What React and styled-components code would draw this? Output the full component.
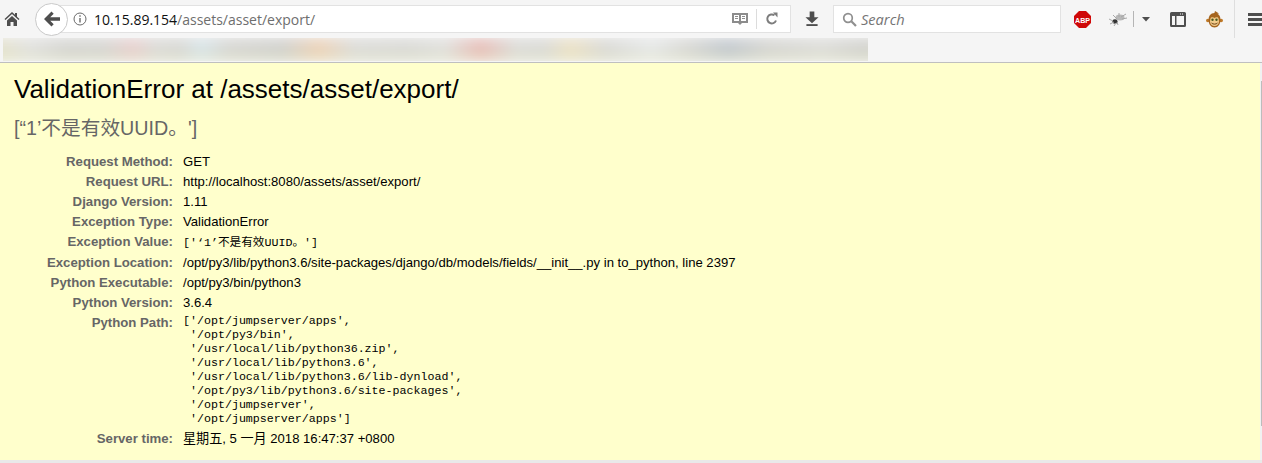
import React from 'react'
import styled, { createGlobalStyle } from 'styled-components'

const GlobalStyle = createGlobalStyle`
  html, body {
    margin: 0;
    padding: 0;
    height: 100%;
    overflow: hidden;
    background: #f5f5f5;
  }
`

const Window = styled.div`
  display: flex;
  flex-direction: column;
  width: 1262px;
  height: 463px;
  background: #e9e9e9;
`

const Toolbar = styled.div`
  display: flex;
  align-items: center;
  height: 38px;
  background: #f5f5f5;
  flex: none;
`

const ToolButton = styled.div`
  display: flex;
  align-items: center;
  justify-content: center;
  flex: none;
  width: ${(p) => p.$w || 24}px;
  margin-left: ${(p) => p.$ml || 0}px;
  color: #4e4e4e;
`

const BackCircle = styled.div`
  display: flex;
  align-items: center;
  justify-content: center;
  flex: none;
  box-sizing: border-box;
  width: 33px;
  height: 33px;
  margin-left: 11px;
  border: 1px solid #c9c9c9;
  border-radius: 50%;
  background: #fff;
  color: #4e4e4e;
  position: relative;
  z-index: 1;
`

const UrlBar = styled.div`
  display: flex;
  align-items: center;
  box-sizing: border-box;
  width: 734px;
  height: 28px;
  margin-left: -11px;
  padding-left: 16px;
  border: 1px solid #e2e2e2;
  border-left: none;
  background: #fff;
  font: 14px 'Open Sans', sans-serif;
  flex: none;
`

const UrlText = styled.div`
  margin-left: 7px;
  color: #6e6e6e;
  white-space: nowrap;
  flex: 1;

  b {
    font-weight: normal;
    color: #111;
  }
`

const BarSep = styled.div`
  flex: none;
  width: 1px;
  height: ${(p) => p.$h || 20}px;
  background: ${(p) => p.$c || '#dcdcdc'};
  margin: ${(p) => p.$m || '0'};
`

const SearchBox = styled.div`
  display: flex;
  align-items: center;
  box-sizing: border-box;
  width: 228px;
  height: 28px;
  margin-left: 14px;
  padding-left: 8px;
  border: 1px solid #e2e2e2;
  background: #fff;
  flex: none;
`

const SearchText = styled.span`
  margin-left: 4px;
  font: italic 14.6px 'Open Sans', sans-serif;
  color: #757575;
`

const BookmarkBar = styled.div`
  height: 24px;
  flex: none;
  background: #f5f5f5;
  border-bottom: 1px solid #bfbfbf;
  padding-left: 3px;
`

const BlurClip = styled.div`
  width: 865px;
  height: 23px;
  overflow: hidden;
`

const BlurStrip = styled.div`
  width: 865px;
  height: 23px;
  filter: blur(5px);
  transform: scale(1.04);
  background:
    linear-gradient(180deg, rgba(232, 232, 232, 0.6) 0%, rgba(218, 218, 214, 0.5) 50%, rgba(232, 234, 208, 0.75) 100%),
    linear-gradient(
      90deg,
      #e8e0b4 0%,
      #ece8c8 2%,
      #e6e6e4 5%,
      #cfcfcb 9%,
      #d0d0cc 13%,
      #f2c4c4 16.4%,
      #dadad6 19%,
      #d4d4d0 21.5%,
      #d4ecf6 24%,
      #d2d2ce 27%,
      #c6c6c2 33%,
      #fcc898 37%,
      #dcdcd8 41%,
      #d8d8d4 47%,
      #e4e4e0 51%,
      #f2a098 55%,
      #dcdcd8 59%,
      #d8d8d4 62%,
      #fae6b4 65%,
      #d8d8d4 69%,
      #f0f4f6 74%,
      #d6d6d2 78%,
      #aab6c4 82.5%,
      #d0d0cc 87%,
      #dededa 93%,
      #c8c8c4 98%,
      #e4e4cc 100%
    );
`

const Content = styled.div`
  display: flex;
  flex: none;
  height: 397px;
`

const Page = styled.div`
  flex: 1;
  box-sizing: border-box;
  padding: 12px 14px 0;
  background: #ffc;
  color: #000;
  font-family: 'Liberation Sans', Arial, 'Noto Sans CJK SC', sans-serif;
  font-size: 13px;
`

const ScrollTrack = styled.div`
  flex: none;
  width: 2px;
  background: #f1f1f1;
`

const ScrollThumb = styled.div`
  width: 1px;
  height: 345px;
  margin: 18px 0 0 1px;
  background: #bcbcbc;
`

const Title = styled.h1`
  margin: 0;
  font-size: 26px;
  line-height: 29px;
  font-weight: normal;
`

const ExceptionValue = styled.pre`
  margin: 11px 0 0;
  font-family: 'Liberation Sans', 'Noto Sans CJK SC', sans-serif;
  font-size: 19.700px;
  line-height: 26px;
  color: #666;
`

const Meta = styled.table`
  margin-top: 11px;
  border-collapse: collapse;
  border: none;
`

const Row = styled.tr`
  vertical-align: top;
`

const Label = styled.th`
  box-sizing: border-box;
  width: 159px;
  padding: 3px 0;
  text-align: right;
  white-space: nowrap;
  font-weight: bold;
  font-size: 13.200px;
  line-height: 14px;
  color: #666;
`

const Value = styled.td`
  padding: 3px 0 3px 10px;
  font-size: 13.100px;
  line-height: 14px;
  white-space: nowrap;
`

const Mono = styled.pre`
  margin: ${(p) => p.$mt || 0}px 0 0 0;
  font-family: 'Liberation Mono', 'Noto Sans CJK SC', monospace;
  font-size: 11.650px;
  line-height: 14px;
`

const HomeIcon = () => (
  <svg width="16" height="16" viewBox="0 0 16 16" fill="currentColor">
    <path d="M8 1 0.500 8l1 1L8 3l6.500 6 1-1L13 5.700V2h-2v1.800L8 1z" />
    <path d="M3 9.500 8 5l5 4.500V15H9.500v-4h-3v4H3z" />
  </svg>
)

const BackIcon = () => (
  <svg width="18" height="16" viewBox="0 0 18 16" fill="currentColor">
    <path d="M8.500 0.500 10.700 2.700 7.200 6.200H17V9.800H7.200l3.500 3.500-2.200 2.200L1 8z" />
  </svg>
)

const InfoIcon = () => (
  <svg width="14" height="14" viewBox="0 0 14 14" fill="none" stroke="#6a6a6a">
    <circle cx="7" cy="7" r="6" />
    <path d="M7 6v4.500" strokeWidth="1.400" />
    <path d="M7 3.200v1.500" strokeWidth="1.400" />
  </svg>
)

const ReaderIcon = () => (
  <svg width="16" height="14" viewBox="0 0 16 14" fill="#8c8c8c">
    <path d="M0 1h16v10h-6l-2 2-2-2H0z" />
    <path d="M2 3h5v6H2zM9 3h5v6H9z" fill="#fff" />
    <path d="M3 4h3v1H3zM3 6h3v1H3zM10 4h3v1h-3zM10 6h3v1h-3z" />
  </svg>
)

const ReloadIcon = () => (
  <svg width="14" height="14" viewBox="0 0 14 14" fill="none">
    <path d="M11 8.500A4.500 4.500 0 1 1 9.500 3.300" stroke="#7d7d7d" strokeWidth="2" />
    <path d="M8 0.500h4.500V5.500z" fill="#7d7d7d" />
  </svg>
)

const DownloadIcon = () => (
  <svg width="15" height="16" viewBox="0 0 15 16" fill="currentColor">
    <path d="M5 0h5v6h4.500L7.500 12.500 0.500 6H5z" />
    <path d="M1.500 13.500h12V15.500h-12z" />
  </svg>
)

const SearchIcon = () => (
  <svg width="15" height="15" viewBox="0 0 15 15" fill="none" stroke="#8f8f8f">
    <circle cx="6" cy="6" r="4.300" strokeWidth="1.700" />
    <path d="M9.300 9.300 14 14" strokeWidth="2.200" />
  </svg>
)

const AbpIcon = () => (
  <svg width="17" height="17" viewBox="0 0 17 17">
    <path d="M5 0h7l5 5v7l-5 5H5l-5-5V5z" fill="#cf0808" />
    <text x="8.500" y="11.600" textAnchor="middle" fontSize="8" textLength="15" lengthAdjust="spacingAndGlyphs" fontWeight="bold" fontFamily="'Liberation Sans', sans-serif" fill="#fff">ABP</text>
  </svg>
)

const SpiderIcon = () => (
  <svg width="20" height="16" viewBox="0 0 20 16" fill="none">
    <ellipse cx="7" cy="10.500" rx="2.600" ry="2.200" fill="#333" />
    <ellipse cx="12" cy="6.500" rx="4.500" ry="3" fill="#b8b8b8" />
    <path d="M1 8 5 10M2 13 6 11M6 15 8 12M10 14 9 11M5 4 9 8M11 2 11 6M18 3 13 6M19 7 14 8" stroke="#a8a8a8" strokeWidth="1" />
  </svg>
)

const CaretIcon = () => (
  <svg width="8" height="5" viewBox="0 0 8 5" fill="#4e4e4e">
    <path d="M0 0h8L4 4.500z" />
  </svg>
)

const SidebarIcon = () => (
  <svg width="16" height="15" viewBox="0 0 16 15">
    <path d="M1.500 0h13A1.500 1.500 0 0 1 16 1.500v12a1.500 1.500 0 0 1-1.500 1.500h-13A1.500 1.500 0 0 1 0 13.500v-12A1.500 1.500 0 0 1 1.500 0z" fill="#4e4e4e" />
    <path d="M2 4h3v9H2zM6.500 4H14v9H6.500z" fill="#f5f5f5" />
    <path d="M10 1.500h1v1h-1zM12 1.500h1v1h-1z" fill="#f5f5f5" />
  </svg>
)

const MonkeyIcon = () => (
  <svg width="17" height="17" viewBox="0 0 17 17">
    <circle cx="1.800" cy="9.500" r="1.800" fill="#c07a28" />
    <circle cx="15.200" cy="9.500" r="1.800" fill="#c07a28" />
    <path d="M8.500 2c4 0 6 3 6 7s-2.500 7.500-6 7.500-6-3.500-6-7.500 2-7 6-7z" fill="#a5651f" />
    <path d="M9 0 13 2.500 8 3.500z" fill="#a5651f" />
    <path d="M4.500 7.500c0-1.500 3-1.800 4-0.500 1-1.300 4-1 4 .5 0 1 .5 2 .5 3 0 2.500-2 4.500-4.500 4.500S4 13 4 10.500c0-1 .5-2 .5-3z" fill="#f2cb8a" />
    <circle cx="6.500" cy="8.800" r="1.200" fill="#4a5a20" />
    <circle cx="10.500" cy="8.800" r="1.200" fill="#4a5a20" />
    <path d="M5.500 12c1.500 1.500 4.500 1.500 6 0" fill="none" stroke="#6a3f14" />
  </svg>
)

const MenuIcon = () => (
  <svg width="14" height="13" viewBox="0 0 14 13" fill="#4e4e4e">
    <path d="M0 0h14v3H0zM0 5h14v3H0zM0 10h14v3H0z" />
  </svg>
)

const meta = [
  ['Request Method:', 'GET'],
  ['Request URL:', 'http://localhost:8080/assets/asset/export/'],
  ['Django Version:', '1.11'],
  ['Exception Type:', 'ValidationError'],
  ['Exception Value:', <Mono $mt={1}>{"['‘1’不是有效UUID。']"}</Mono>],
  ['Exception Location:', '/opt/py3/lib/python3.6/site-packages/django/db/models/fields/__init__.py in to_python, line 2397'],
  ['Python Executable:', '/opt/py3/bin/python3'],
  ['Python Version:', '3.6.4'],
  ['Python Path:', (
    <Mono $mt={-2}>{`['/opt/jumpserver/apps',
 '/opt/py3/bin',
 '/usr/local/lib/python36.zip',
 '/usr/local/lib/python3.6',
 '/usr/local/lib/python3.6/lib-dynload',
 '/opt/py3/lib/python3.6/site-packages',
 '/opt/jumpserver',
 '/opt/jumpserver/apps']`}</Mono>
  )],
  ['Server time:', '星期五, 5 一月 2018 16:47:37 +0800'],
]

const App = () => {
  return (
    <Window>
      <GlobalStyle />
      <Toolbar>
        <ToolButton $w={24}><HomeIcon /></ToolButton>
        <BackCircle><BackIcon /></BackCircle>
        <UrlBar>
          <InfoIcon />
          <UrlText><b>10.15.89.154</b>/assets/asset/export/</UrlText>
          <ReaderIcon />
          <BarSep $m="0 8px 0 8px" />
          <ReloadIcon />
          <ToolButton $w={11} />
        </UrlBar>
        <ToolButton $w={14} $ml={14}><DownloadIcon /></ToolButton>
        <SearchBox>
          <SearchIcon />
          <SearchText>Search</SearchText>
        </SearchBox>
        <ToolButton $w={17} $ml={13}><AbpIcon /></ToolButton>
        <ToolButton $w={20} $ml={17}><SpiderIcon /></ToolButton>
        <BarSep $c="#b5b5b5" $h={16} $m="0 0 0 5px" />
        <ToolButton $w={8} $ml={8}><CaretIcon /></ToolButton>
        <ToolButton $w={16} $ml={20}><SidebarIcon /></ToolButton>
        <ToolButton $w={17} $ml={20}><MonkeyIcon /></ToolButton>
        <BarSep $c="#dedede" $h={38} $m="0 0 0 11px" />
        <ToolButton $w={14} $ml={13}><MenuIcon /></ToolButton>
      </Toolbar>
      <BookmarkBar>
        <BlurClip><BlurStrip /></BlurClip>
      </BookmarkBar>
      <Content>
        <Page>
          <Title>ValidationError at /assets/asset/export/</Title>
          <ExceptionValue>{"[“1’不是有效UUID。']"}</ExceptionValue>
          <Meta>
            <tbody>
              {meta.map(([label, value]) => (
                <Row key={label}>
                  <Label>{label}</Label>
                  <Value>{value}</Value>
                </Row>
              ))}
            </tbody>
          </Meta>
        </Page>
        <ScrollTrack><ScrollThumb /></ScrollTrack>
      </Content>
    </Window>
  )
}

export default App
